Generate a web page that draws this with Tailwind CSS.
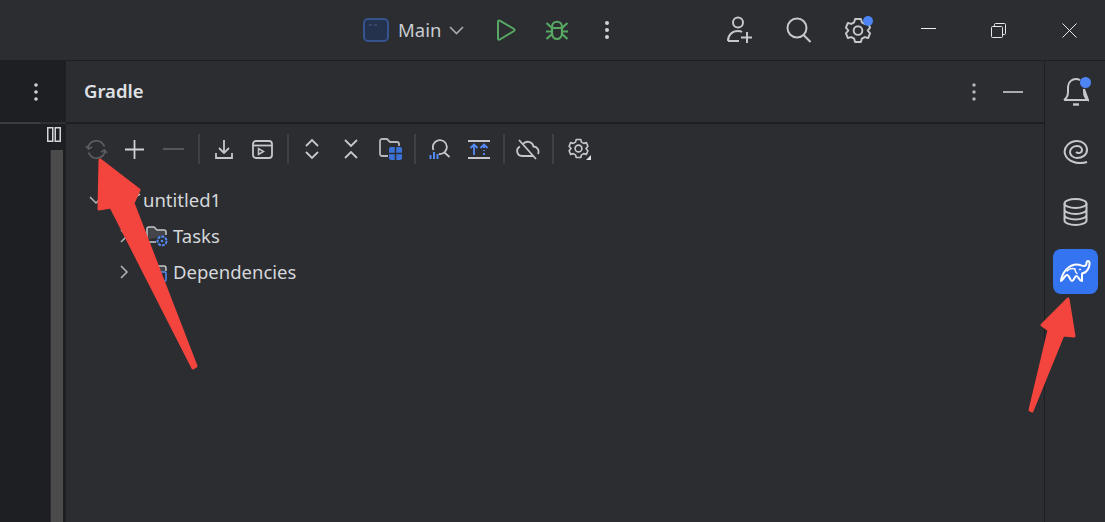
<!DOCTYPE html>
<html lang="en">
<head>
  <meta charset="UTF-8"/>
  <meta name="viewport" content="width=device-width, initial-scale=1.0"/>
  <title>Gradle</title>
  <script src="https://cdn.jsdelivr.net/npm/@tailwindcss/browser@4"></script>
</head>
<body class="relative w-[1105px] h-[522px] overflow-hidden bg-[#2b2d30] text-[#dfe1e5] font-['Noto_Sans',sans-serif]">

  <!-- Title bar -->
  <header class="flex items-center h-[61px] pl-[363px] border-b border-[#1e1f22]">
    <svg class="shrink-0" width="26" height="24" viewBox="0 0 26 24" fill="none"><rect x="1" y="1" width="24" height="22" rx="4" fill="#25324d" stroke="#35538f" stroke-width="2"/><path d="M6 7h3M11 7h3" stroke="#4a5f8c" stroke-width="1.2"/></svg>
    <span class="ml-[9px] w-[44px] shrink-0 text-[18.5px] leading-none text-[#c9ccd2]">Main</span>
    <svg class="ml-[7px] shrink-0" width="15" height="9" viewBox="0 0 15 9" fill="none"><path d="M1 1l6.500 6.500L14 1" stroke="#a8abb0" stroke-width="1.600"/></svg>
    <svg class="ml-[32px] shrink-0" width="20" height="22" viewBox="0 0 20 22" fill="none"><path d="M2 2.600c0-1 1-1.500 1.800-1L18 10c.8.500.8 1.500 0 2L3.800 20.500c-.8.500-1.800 0-1.800-1z" stroke="#57a863" stroke-width="2" stroke-linejoin="round"/></svg>
    <svg class="ml-[29px] shrink-0" width="24" height="22" viewBox="0 0 24 22" fill="none" stroke="#57a863" stroke-width="2.200"><path d="M7 8c0-7 10-7 10 0v6c0 8-10 8-10 0z"/><path d="M7 9h10M1.500 4l5.500 5M22.500 4L17 9M1 12.500h6M23 12.500h-6M1.500 20L7 15M22.500 20L17 15"/></svg>
    <svg class="ml-[33px] shrink-0" width="10" height="20" viewBox="0 0 10 20" fill="#d0d2d6"><circle cx="5" cy="3" r="2"/><circle cx="5" cy="10" r="2"/><circle cx="5" cy="17" r="2"/></svg>
    <svg class="ml-[115px] shrink-0" width="26" height="28" viewBox="0 0 26 28" fill="none" stroke="#c5c7cb" stroke-width="2"><circle cx="11" cy="6.500" r="5"/><path d="M1 25c0-6 4-10 10-10 1.500 0 3 .3 4 1M1 25h11M20 16v11M14 21.500h11"/></svg>
    <svg class="ml-[33px] shrink-0" width="25" height="26" viewBox="0 0 25 26" fill="none" stroke="#c5c7cb" stroke-width="2"><circle cx="11" cy="11" r="9.500"/><path d="M17.500 18l7 7"/></svg>
    <div class="relative ml-[34px] shrink-0 w-[28px] h-[28px]">
      <svg class="absolute left-0 top-[1px]" width="26" height="27" viewBox="0 0 26 28" fill="none" stroke="#c5c7cb" stroke-width="2" stroke-linejoin="round"><circle cx="13" cy="14" r="4.500"/><path d="M10 2h6l1 3.500 3 1.700 3.500-1L25.500 11 23 14l2.500 3-2 4.800-3.500-1-3 1.700-1 3.500h-6l-1-3.500-3-1.700-3.500 1L.5 17 3 14 .5 11l2-4.800 3.500 1 3-1.700z"/></svg>
      <span class="absolute right-0 top-0 w-[10px] h-[10px] rounded-full bg-[#4d85f5]"></span>
    </div>
    <svg class="ml-[48px] shrink-0 mb-[4px]" width="15" height="1" viewBox="0 0 15 1"><path d="M0 .5h15" stroke="#eceef0"/></svg>
    <svg class="ml-[55px] shrink-0" width="15" height="15" viewBox="0 0 15 15" fill="none" stroke="#e4e6e8"><rect x=".5" y="3.500" width="11" height="11" rx="1"/><path d="M3.500 3.500V1.500a1 1 0 0 1 1-1h9a1 1 0 0 1 1 1v9a1 1 0 0 1-1 1h-2"/></svg>
    <svg class="ml-[56px] shrink-0" width="15" height="15" viewBox="0 0 15 15" fill="none" stroke="#e4e6e8"><path d="M.5.500l14 14M14.500.500l-14 14"/></svg>
  </header>

  <div class="flex h-[461px]">
    <!-- Editor edge -->
    <div class="w-[66px] shrink-0 flex flex-col bg-[#1e1f22]">
      <div class="flex items-center justify-end h-[61px] pr-[27px] shrink-0">
        <svg width="6" height="20" viewBox="0 0 6 20" fill="#d0d2d6"><circle cx="3" cy="3" r="1.800"/><circle cx="3" cy="10" r="1.800"/><circle cx="3" cy="17" r="1.800"/></svg>
      </div>
      <div class="flex h-[2px] shrink-0">
        <div class="w-[40px] bg-[#3a3c40]"></div>
        <div class="flex-1 bg-[#2e3033]"></div>
      </div>
      <div class="flex-1 flex flex-col items-end">
        <svg class="mr-[5px] mt-[3px] shrink-0" width="14" height="15" viewBox="0 0 14 15" fill="none" stroke="#d4d6da" stroke-width="1.500"><rect x=".75" y=".75" width="5" height="13.500"/><rect x="8.250" y=".75" width="5" height="13.500"/></svg>
        <div class="flex-1 w-[16px] mt-[8px] flex">
          <div class="w-[1px] bg-[#2b2c2f]"></div>
          <div class="w-[12px] bg-[#4b4b4c]"></div>
          <div class="w-[3px] bg-[#1e1f22]"></div>
        </div>
      </div>
    </div>

    <!-- Gradle tool window -->
    <main class="flex-1 flex flex-col border-r border-[#1e1f22]">
      <div class="flex items-center h-[63px] shrink-0 pl-[18px] border-b-2 border-[#1e1f22]">
        <h1 class="w-[870px] shrink-0 text-[18.5px] font-semibold leading-none text-[#dfe1e5]">Gradle</h1>
        <svg class="ml-[17px] shrink-0" width="6" height="20" viewBox="0 0 6 20" fill="#b5b7bb"><circle cx="3" cy="3" r="1.700"/><circle cx="3" cy="10" r="1.700"/><circle cx="3" cy="17" r="1.700"/></svg>
        <svg class="ml-[26px] shrink-0" width="20" height="2" viewBox="0 0 20 2"><path d="M0 1h20" stroke="#a9abaf" stroke-width="2"/></svg>
      </div>

      <!-- Toolbar -->
      <div class="flex items-center h-[50px] shrink-0 pl-[19px]">
        <svg class="shrink-0" width="23" height="23" viewBox="0 0 23 23" fill="none" stroke="#5d5f64" stroke-width="1.600"><path d="M3 10a8.500 8.500 0 0 1 15-4l1.500 2.500M20 13a8.500 8.500 0 0 1-15 4l-1.500-2.500"/><path d="M1 8l2.500 3L7 9M22 15l-2.500-3L16 14"/></svg>
        <svg class="ml-[16px] shrink-0" width="21" height="21" viewBox="0 0 21 21" fill="none" stroke="#cfd1d5" stroke-width="1.800"><path d="M10.500 1v19M1 10.500h19"/></svg>
        <svg class="ml-[18px] shrink-0" width="21" height="2" viewBox="0 0 21 2"><path d="M0 1h21" stroke="#55575c" stroke-width="2"/></svg>
        <div class="ml-[14px] w-[2px] h-[30px] bg-[#3e4045] shrink-0"></div>
        <svg class="ml-[15px] shrink-0" width="18" height="20" viewBox="0 0 18 20" fill="none" stroke="#c5c7cb" stroke-width="1.800"><path d="M9 1v12M4 9l5 5 5-5M1 14v5h16v-5"/></svg>
        <svg class="ml-[19px] shrink-0" width="21" height="19" viewBox="0 0 21 19" fill="none" stroke="#c5c7cb" stroke-width="1.800"><rect x="1" y="1" width="19" height="17" rx="3"/><path d="M1 5.500h19"/><path d="M6.500 8.500v6l5-3z" stroke-width="1.500"/></svg>
        <div class="ml-[14px] w-[2px] h-[30px] bg-[#3e4045] shrink-0"></div>
        <svg class="ml-[16px] shrink-0" width="14" height="22" viewBox="0 0 14 22" fill="none" stroke="#c5c7cb" stroke-width="1.800"><path d="M1 8l6-6 6 6M1 14l6 6 6-6"/></svg>
        <svg class="ml-[25px] shrink-0" width="14" height="22" viewBox="0 0 14 22" fill="none" stroke="#c5c7cb" stroke-width="1.800"><path d="M1 2l6 6 6-6M1 20l6-6 6 6"/></svg>
        <svg class="ml-[21px] shrink-0" width="23" height="22" viewBox="0 0 23 22" fill="none"><path d="M9 18H3a2 2 0 0 1-2-2V3a2 2 0 0 1 2-2h5l3 3h7a2 2 0 0 1 2 2v2" stroke="#b5b7bb" stroke-width="1.800"/><rect x="10" y="9" width="13" height="13" rx="2" fill="#3b72d9"/><path d="M16.500 9v13M10 15.500h13" stroke="#2b2d30" stroke-width="1.500"/></svg>
        <div class="ml-[12px] w-[2px] h-[30px] bg-[#3e4045] shrink-0"></div>
        <svg class="ml-[13px] shrink-0" width="21" height="21" viewBox="0 0 21 21" fill="none"><path d="M4.500 11A7 7 0 1 1 10 15M15.500 13.500l5 4.500" stroke="#c5c7cb" stroke-width="1.800"/><path d="M1.500 16v4M5 13v7M8.500 15v5" stroke="#548af7" stroke-width="2"/></svg>
        <svg class="ml-[18px] shrink-0" width="22" height="19" viewBox="0 0 22 19" fill="none"><path d="M0 1h22M0 18h22" stroke="#c5c7cb" stroke-width="1.800"/><path d="M6 15V5M2.500 8L6 4.500 9.500 8M16 6v2M16 10v1M16 13v2M12.500 8L16 4.500 19.500 8" stroke="#548af7" stroke-width="1.800"/></svg>
        <div class="ml-[13px] w-[2px] h-[30px] bg-[#3e4045] shrink-0"></div>
        <svg class="ml-[11px] shrink-0" width="24" height="21" viewBox="0 0 24 21" fill="none" stroke="#c5c7cb" stroke-width="1.800"><path d="M7 5a6 6 0 0 1 10.500 2.500A5.200 5.200 0 0 1 22 15M17 17H6A5 5 0 0 1 4 7.500M3 1l17 19"/></svg>
        <div class="ml-[12px] w-[2px] h-[30px] bg-[#3e4045] shrink-0"></div>
        <div class="relative ml-[14px] shrink-0 w-[23px] h-[22px]">
          <svg class="absolute left-0 top-0" width="21" height="21" viewBox="0 0 26 28" fill="none" stroke="#c5c7cb" stroke-width="2.200" stroke-linejoin="round"><circle cx="13" cy="14" r="4.500"/><path d="M10 2h6l1 3.500 3 1.700 3.500-1L25.500 11 23 14l2.500 3-2 4.800-3.500-1-3 1.700-1 3.500h-6l-1-3.500-3-1.700-3.500 1L.5 17 3 14 .5 11l2-4.800 3.500 1 3-1.700z"/></svg>
          <svg class="absolute right-0 bottom-0" width="5" height="5" viewBox="0 0 5 5"><path d="M5 0v5H0z" fill="#dfe1e5"/></svg>
        </div>
      </div>

      <!-- Tree -->
      <ul class="pt-[8px] text-[18.5px] leading-none text-[#d5d7db]">
        <li class="flex items-center h-[36px] pl-[23px]">
          <svg class="shrink-0" width="14" height="9" viewBox="0 0 14 9" fill="none"><path d="M1 1l6 6 6-6" stroke="#b5b7bb" stroke-width="1.500"/></svg>
          <svg class="ml-[25px] shrink-0" width="16" height="16" viewBox="0 0 16 16" fill="none"><path d="M4 8l8-6" stroke="#cfd1d5" stroke-width="1.500"/></svg>
          <span class="ml-[-1px]">untitled1</span>
        </li>
        <li class="flex items-center h-[36px] pl-[54px]">
          <svg class="shrink-0" width="10" height="14" viewBox="0 0 10 14" fill="none"><path d="M1 1l6 6-6 6" stroke="#b5b7bb" stroke-width="1.500"/></svg>
          <svg class="ml-[16px] shrink-0" width="22" height="22" viewBox="0 0 22 22" fill="none"><path d="M1 15V4a2 2 0 0 1 2-2h5l3 3h7a2 2 0 0 1 2 2v3" stroke="#c5c7cb" stroke-width="1.500" fill="#43454a"/><path d="M1 15v2h9" stroke="#c5c7cb" stroke-width="1.500"/><circle cx="16" cy="16" r="4.500" fill="#2b2d30" stroke="#548af7" stroke-width="2" stroke-dasharray="3 1"/><circle cx="16" cy="16" r="1.300" fill="#548af7"/></svg>
          <span class="ml-[5px]">Tasks</span>
        </li>
        <li class="flex items-center h-[36px] pl-[54px]">
          <svg class="shrink-0" width="10" height="14" viewBox="0 0 10 14" fill="none"><path d="M1 1l6 6-6 6" stroke="#b5b7bb" stroke-width="1.500"/></svg>
          <svg class="ml-[16px] shrink-0" width="22" height="22" viewBox="0 0 22 22" fill="none"><path d="M1 15V4a2 2 0 0 1 2-2h5l3 3h7a2 2 0 0 1 2 2v3" stroke="#c5c7cb" stroke-width="1.500" fill="#43454a"/><rect x="12" y="11" width="8" height="9" rx="1" fill="#2b2d30" stroke="#548af7" stroke-width="1.500"/></svg>
          <span class="ml-[5px]">Dependencies</span>
        </li>
      </ul>
    </main>

    <!-- Right tool strip -->
    <aside class="w-[60px] shrink-0 flex flex-col items-center pl-[1px]">
      <div class="relative mt-[16px] w-[26px] h-[30px] shrink-0">
        <svg class="absolute left-0 top-0" width="26" height="30" viewBox="0 0 26 30" fill="none" stroke="#c5c7cb" stroke-width="2"><path d="M1 23c3-2 4-4 4-8V10c0-5 4-8 8-8 2 0 3 .5 4 1.200M21 12v3c0 4 1 6 4 8zM1 23h24"/><path d="M10 27.500h6" stroke-width="2.400"/></svg>
        <span class="absolute right-[-2px] top-0 w-[11px] h-[11px] rounded-full bg-[#4d85f5]"></span>
      </div>
      <svg class="mt-[33px] shrink-0" width="25" height="24" viewBox="0 0 25 24" fill="none" stroke="#c5c7cb" stroke-width="2"><path d="M24 22C14 25 4 21 2 14 0 7 7 1 14 1c6 0 10 4 10 9 0 5-5 8-10 8-4 0-7-3-7-6 0-4 4-6 7-6 3 0 5 2 5 4 0 3-4 4-6 2"/></svg>
      <svg class="mt-[34px] shrink-0" width="25" height="28" viewBox="0 0 25 28" fill="none" stroke="#c5c7cb" stroke-width="2"><ellipse cx="12.500" cy="5.500" rx="11" ry="4.500"/><path d="M1.500 5.500v17c0 2.500 5 4.500 11 4.500s11-2 11-4.500v-17M1.500 11.500c0 2.500 5 4.500 11 4.500s11-2 11-4.500M1.500 17c0 2.500 5 4.500 11 4.500s11-2 11-4.500"/></svg>
      <button class="mt-[23px] w-[45px] h-[45px] shrink-0 flex items-center justify-center rounded-[8px] bg-[#3574f0]">
        <svg width="31" height="23" viewBox="0 0 31 23" fill="none" stroke="#fff" stroke-width="2" stroke-linejoin="round" stroke-linecap="round"><path d="M1 21C2 12 9 4.500 17 4.500c3 0 5 1.500 7 1.500 2 0 2.500-1.500 2.500-3C26.500 1 29 0 29.500 2.500 30 7 27 13 22 13.500V21c-2.500.500-3.500-5-5.500-5S14 21 12 21 9.500 15 7 15 3 21 1 21z"/><path d="M7 11c2-2 5-3 8-2 0 2 .5 3.500 2 4.500" stroke-width="1.400"/><circle cx="20" cy="9.500" r=".6" fill="#fff" stroke-width="1"/></svg>
      </button>
    </aside>
  </div>

  <!-- Red annotation arrows drawn over the screenshot -->
  <svg class="absolute left-0 top-0 pointer-events-none" width="1105" height="522" viewBox="0 0 1105 522" fill="#f4443e" stroke="#f4443e" stroke-width="3" stroke-linejoin="round">
    <polygon points="100,160 139,190 133,203 196,366 193,368 111,207 99,209"/>
    <polygon points="1068,299 1042,325 1049,330 1030,410 1032,411 1063,335 1074,336"/>
  </svg>
</body>
</html>
